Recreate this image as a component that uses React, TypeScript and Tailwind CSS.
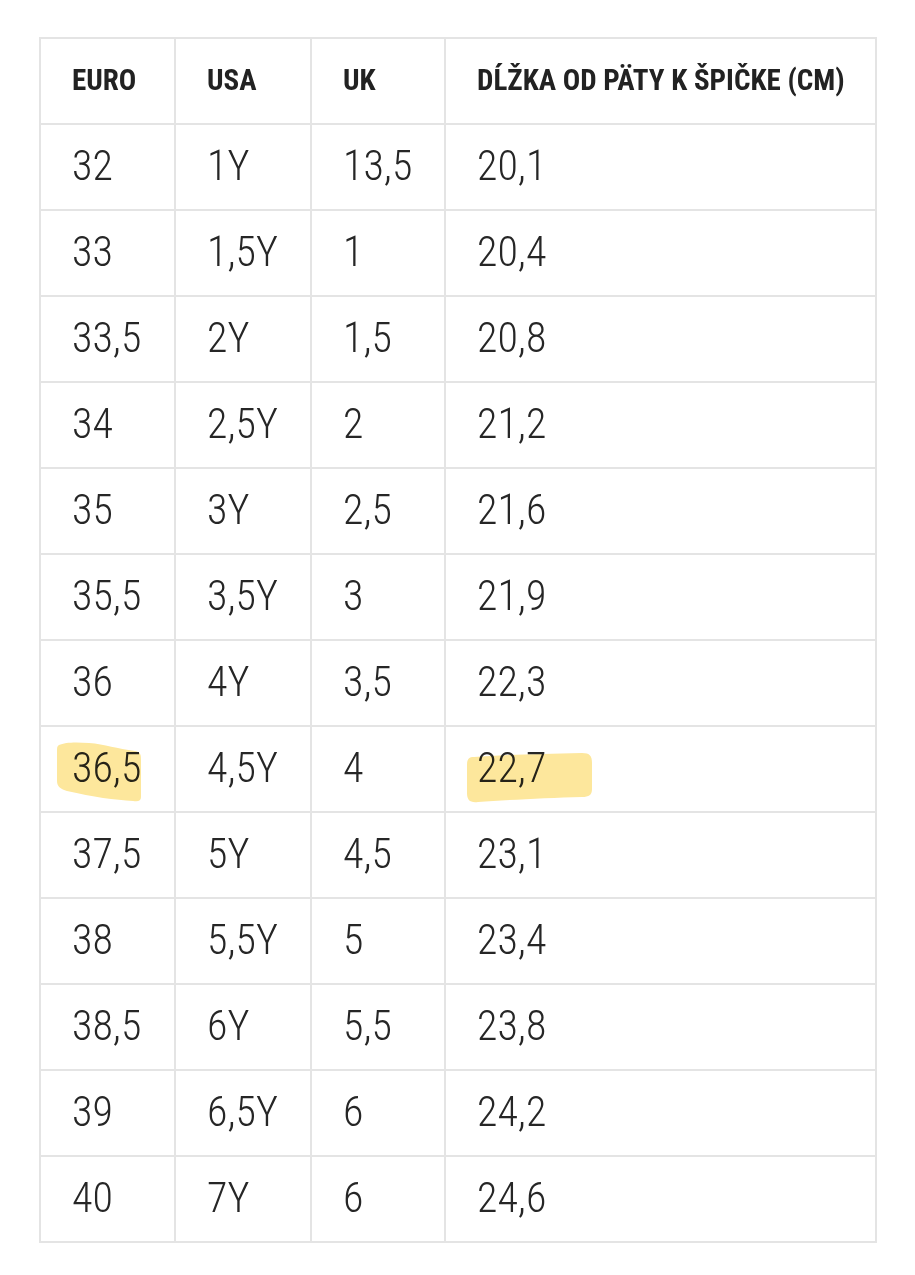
const rows: [string, string, string, string][] = [
  ["32", "1Y", "13,5", "20,1"],
  ["33", "1,5Y", "1", "20,4"],
  ["33,5", "2Y", "1,5", "20,8"],
  ["34", "2,5Y", "2", "21,2"],
  ["35", "3Y", "2,5", "21,6"],
  ["35,5", "3,5Y", "3", "21,9"],
  ["36", "4Y", "3,5", "22,3"],
  ["36,5", "4,5Y", "4", "22,7"],
  ["37,5", "5Y", "4,5", "23,1"],
  ["38", "5,5Y", "5", "23,4"],
  ["38,5", "6Y", "5,5", "23,8"],
  ["39", "6,5Y", "6", "24,2"],
  ["40", "7Y", "6", "24,6"],
];

const headers = ["EURO", "USA", "UK", "DĹŽKA OD PÄTY K ŠPIČKE (CM)"];

function Highlight1() {
  return (
    <svg
      className="absolute left-[14px] top-[14px] pointer-events-none mix-blend-multiply"
      width="88"
      height="62"
      viewBox="0 0 88 62"
    >
      <path
        d="M4 4 C10 1 22 1 34 2 C50 3 62 8 80 10 C86 11 86 14 86 20 L86 56 C86 60 83 61 78 60 C60 59 38 56 12 50 C6 48 2 46 2 40 L2 10 C2 7 2 5 4 4 Z"
        fill="#fde79c"
      />
    </svg>
  );
}

function Highlight2() {
  return (
    <svg
      className="absolute left-[20px] top-[26px] pointer-events-none mix-blend-multiply"
      width="128"
      height="52"
      viewBox="0 0 128 52"
    >
      <path
        d="M8 4 C30 2 70 1 116 0 C124 0 126 3 126 10 L126 36 C126 42 123 44 116 44 C80 45 40 47 12 49 C4 50 1 47 1 40 L1 12 C1 6 3 4 8 4 Z"
        fill="#fde79c"
      />
    </svg>
  );
}

export default function App() {
  return (
    <div className="w-[915px] h-[1275px] bg-white pt-[37px] pl-[39px]">
      <div className="grid w-[838px] grid-cols-[133px_134px_132px_429px] auto-rows-[84px] gap-[2px] bg-[#e4e4e4] p-[2px] font-['Roboto_Condensed',_'Roboto',_sans-serif]">
        {headers.map((h) => (
          <div
            key={h}
            className="flex items-center bg-white pl-[31px] text-[29px] font-bold text-[#222222] pb-[1px]"
          >
            {h}
          </div>
        ))}
        {rows.map((r, ri) =>
          r.map((c, ci) => (
            <div
              key={ri + "-" + ci}
              className="relative flex items-center bg-white pl-[31px] text-[42px] font-light leading-none text-[#262626] pb-[3px]"
            >
              <span className="relative">{c}</span>
              {ri === 7 && ci === 0 && <Highlight1 />}
              {ri === 7 && ci === 3 && <Highlight2 />}
            </div>
          ))
        )}
      </div>
    </div>
  );
}
